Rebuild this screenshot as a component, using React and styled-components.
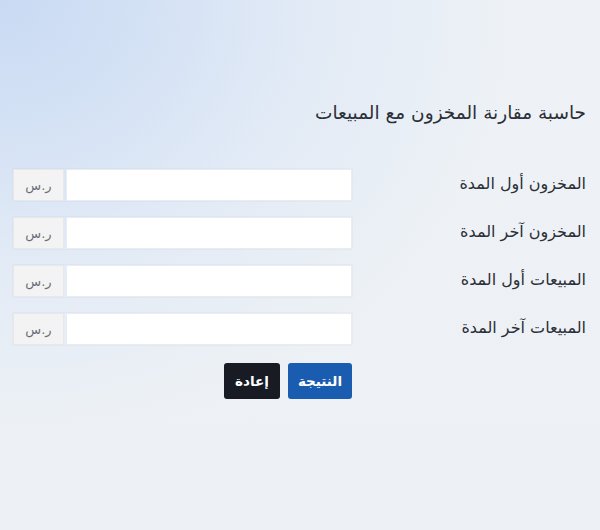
import React, { useState } from 'react';
import styled, { createGlobalStyle } from 'styled-components';

const GlobalStyle = createGlobalStyle`
  html, body {
    margin: 0;
    padding: 0;
  }
  body {
    font-family: "DejaVu Sans", "Noto Sans", sans-serif;
    background: #eef1f5;
  }
`;

const Page = styled.div`
  min-height: 530px;
  box-sizing: border-box;
  padding: 99px 14px 40px 13px;
  direction: rtl;
  background:
    radial-gradient(
      ellipse 620px 520px at 0 0,
      #c9daf3 0%,
      #d6e3f5 28%,
      #e3ebf6 52%,
      rgba(236, 241, 246, 0) 85%
    ),
    linear-gradient(180deg, #eef2f6 0%, #edf1f5 100%);
`;

const Title = styled.h2`
  margin: 0 0 42px;
  font-size: 18.5px;
  font-weight: normal;
  line-height: 28px;
  color: #2b2f36;
`;

const Form = styled.form`
  display: flex;
  flex-direction: column;
  gap: 16px;
`;

const Row = styled.div`
  display: grid;
  grid-template-columns: 1fr 339px;
  align-items: center;
`;

const Label = styled.label`
  font-size: 16px;
  color: #2b2f36;
  margin-top: -4px;
`;

const InputGroup = styled.div`
  display: flex;
  height: 32px;
  box-shadow: 0 0 1px rgba(120, 135, 160, 0.25);
`;

const Field = styled.input`
  flex: 1;
  min-width: 0;
  border: 1px solid #e9ecf0;
  background: #ffffff;
  outline: none;
  padding: 0 10px;
  font: inherit;
  font-size: 14px;
  direction: rtl;
`;

const Addon = styled.span`
  width: 49px;
  display: flex;
  align-items: center;
  justify-content: center;
  margin-right: 2px;
  background: #f3f3f4;
  border: 1px solid #e6e8ec;
  font-size: 13px;
  color: #6b6e74;
`;

const Actions = styled.div`
  display: flex;
  gap: 8px;
  margin-top: 2px;
  padding-right: calc(100% - 339px);
  box-sizing: border-box;
`;

const Button = styled.button`
  height: 36px;
  width: ${(p) => (p.$dark ? '56px' : '64px')};
  padding: 0;
  border: none;
  border-radius: 3px;
  font-family: inherit;
  font-size: 13.5px;
  font-weight: bold;
  color: #ffffff;
  background: ${(p) => (p.$dark ? '#181b24' : '#1a5db0')};
  cursor: pointer;
`;

const fields = [
  { id: 'stockStart', label: 'المخزون أول المدة' },
  { id: 'stockEnd', label: 'المخزون آخر المدة' },
  { id: 'salesStart', label: 'المبيعات أول المدة' },
  { id: 'salesEnd', label: 'المبيعات آخر المدة' },
];

export default function App() {
  const [values, setValues] = useState({});

  const handleChange = (id) => (e) => {
    setValues({ ...values, [id]: e.target.value });
  };

  return (
    <Page>
      <GlobalStyle />
      <Title>حاسبة مقارنة المخزون مع المبيعات</Title>
      <Form onSubmit={(e) => e.preventDefault()}>
        {fields.map((f) => (
          <Row key={f.id}>
            <Label htmlFor={f.id}>{f.label}</Label>
            <InputGroup>
              <Field
                id={f.id}
                type="text"
                value={values[f.id] || ''}
                onChange={handleChange(f.id)}
              />
              <Addon>ر.س</Addon>
            </InputGroup>
          </Row>
        ))}
        <Actions>
          <Button type="submit">النتيجة</Button>
          <Button type="button" $dark onClick={() => setValues({})}>
            إعادة
          </Button>
        </Actions>
      </Form>
    </Page>
  );
}
